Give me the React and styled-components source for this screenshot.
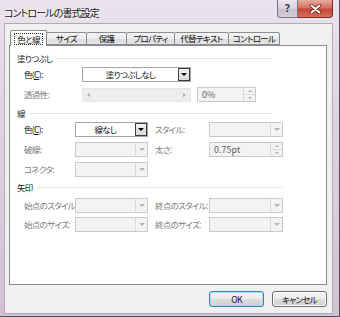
import React from "react"
import styled, { createGlobalStyle } from "styled-components"

const GlobalStyle = createGlobalStyle`
  html, body {
    margin: 0;
    padding: 0;
    background: #ffffff;
  }
  body {
    font-family: "Noto Sans CJK JP", "Noto Sans", sans-serif;
    font-feature-settings: "palt";
    color: #000;
  }
`

const Window = styled.div`
  width: 340px;
  height: 317px;
  box-sizing: border-box;
  display: flex;
  flex-direction: column;
  background: linear-gradient(180deg, #eae2ec 0%, #e0d4e3 35%, #d2c0d5 100%);
  border-right: 1px solid #55505a;
  border-bottom: 1px solid #55505a;
`

const TitleBar = styled.div`
  height: 23px;
  flex-shrink: 0;
  display: flex;
  align-items: flex-start;
`

const TitleText = styled.div`
  padding: 6px 0 0 4px;
  font-size: 10px;
  letter-spacing: -0.9px;
  line-height: 14px;
  color: #111;
  text-shadow: 0 0 4px #fff, 0 0 2px #fff;
`

const Captions = styled.div`
  margin-left: auto;
  margin-right: 6px;
  display: flex;
`

const HelpButton = styled.div`
  width: 21px;
  height: 18px;
  box-sizing: border-box;
  border: 1px solid #7d7385;
  border-top: none;
  border-radius: 0 0 0 4px;
  background: linear-gradient(180deg, #ece6ee 0%, #d9d0dd 50%, #c8bccd 51%, #d6cdda 100%);
  display: flex;
  align-items: center;
  justify-content: center;
  font-family: "DejaVu Sans", sans-serif;
  font-weight: bold;
  font-size: 10px;
  color: #3a3a44;
  text-shadow: 0 0 2px #fff;
`

const CloseButton = styled.div`
  width: 35px;
  height: 18px;
  box-sizing: border-box;
  border: 1px solid #6e2f28;
  border-left: none;
  border-top: none;
  border-radius: 0 0 4px 0;
  background: linear-gradient(180deg, #e7aaa0 0%, #d47163 45%, #c44534 55%, #d7705d 100%);
  display: flex;
  align-items: center;
  justify-content: center;
`

const Client = styled.div`
  flex: 1;
  margin: 0 6px 2px 4px;
  box-sizing: border-box;
  background: #f0f0f0;
  border: 1px solid #b4a9b8;
  display: flex;
  flex-direction: column;
  font-size: 8.5px;
  letter-spacing: -0.7px;
`

const TabStrip = styled.div`
  margin: 6px 0 0 5px;
  height: 15px;
  display: flex;
  align-items: flex-end;
  position: relative;
  z-index: 1;
`

const Tab = styled.div`
  width: ${p => p.$w}px;
  height: ${p => (p.$active ? 16 : 13)}px;
  margin-bottom: ${p => (p.$active ? -1 : 0)}px;
  margin-left: ${p => (p.$first ? 0 : -1)}px;
  box-sizing: border-box;
  border: 1px solid #898c95;
  border-bottom: ${p => (p.$active ? "none" : "1px solid #898c95")};
  border-radius: 2px 2px 0 0;
  background: ${p =>
    p.$active ? "#ffffff" : "linear-gradient(180deg, #f4f4f4 0%, #ebebeb 50%, #dedede 51%, #e5e5e5 100%)"};
  display: flex;
  align-items: center;
  justify-content: center;
  line-height: 11px;
  color: #111;
`

const FocusText = styled.span`
  outline: 1px dotted #333;
  outline-offset: 0;
  padding: 0 2px;
  line-height: 10px;
`

const Panel = styled.div`
  margin: 0 5px 0 4px;
  height: 240px;
  box-sizing: border-box;
  background: #ffffff;
  border: 1px solid #898c95;
  display: flex;
  flex-direction: column;
`

const SectionHeader = styled.div`
  display: flex;
  align-items: center;
  height: 10px;
  margin-top: ${p => p.$mt}px;
  margin-right: ${p => p.$end}px;
  padding-left: 7px;
  line-height: 10px;
  color: #1a1a1a;
`

const HeaderLine = styled.div`
  flex: 1;
  height: 1px;
  margin-left: 4px;
  background: #dbe3ec;
`

const Row = styled.div`
  display: flex;
  align-items: center;
  height: 15px;
  margin-top: ${p => p.$mt}px;
  padding-left: 14px;
`

const Label = styled.div`
  width: ${p => p.$w}px;
  margin-left: ${p => p.$ml || 0}px;
  flex-shrink: 0;
  line-height: 11px;
  white-space: nowrap;
  color: ${p => (p.$dim ? "#7c7c7c" : "#111")};
`

const Combo = styled.div`
  width: ${p => p.$w}px;
  height: 15px;
  box-sizing: border-box;
  flex-shrink: 0;
  display: flex;
  border: 1px solid ${p => (p.$off ? "#cacaca" : "#a4a4a4")};
  background: ${p => (p.$off ? "#f3f3f3" : "#ffffff")};
`

const ComboText = styled.div`
  flex: 1;
  text-align: center;
  line-height: 13px;
  color: #111;
`

const ComboArrow = styled.div`
  width: 12px;
  box-sizing: border-box;
  display: flex;
  align-items: center;
  justify-content: center;
  border: ${p => (p.$off ? "none" : "1px solid #3d3d3d")};
  border-left: 1px solid ${p => (p.$off ? "#dadada" : "#3d3d3d")};
  background: ${p => (p.$off ? "transparent" : "linear-gradient(180deg, #f2f2f2 0%, #d8d8d8 100%)")};

  &::after {
    content: "";
    border-left: 3px solid transparent;
    border-right: 3px solid transparent;
    border-top: 3px solid ${p => (p.$off ? "#b4b4b4" : "#000")};
  }
`

const Slider = styled.div`
  width: 109px;
  height: 14px;
  box-sizing: border-box;
  flex-shrink: 0;
  display: flex;
  align-items: center;
  justify-content: space-between;
  padding: 0 4px;
  background: #ededed;
  border: 1px solid #e6e6e6;
`

const SlideArrow = styled.span`
  width: 0;
  height: 0;
  border-top: 2.5px solid transparent;
  border-bottom: 2.5px solid transparent;
  border-left: ${p => (p.$dir === "right" ? "3px solid #a9a9a9" : "none")};
  border-right: ${p => (p.$dir === "left" ? "3px solid #a9a9a9" : "none")};
`

const Spin = styled.div`
  width: ${p => p.$w}px;
  height: 15px;
  margin-left: ${p => p.$ml || 0}px;
  box-sizing: border-box;
  flex-shrink: 0;
  display: flex;
  border: 1px solid #c9c9c9;
  background: #f3f3f3;
`

const SpinText = styled.div`
  flex: 1;
  padding-left: 4px;
  font-size: 9px;
  letter-spacing: 0;
  line-height: 13px;
  color: #5e5e5e;
`

const SpinButtons = styled.div`
  width: 11px;
  border-left: 1px solid #dadada;
  display: flex;
  flex-direction: column;
`

const SpinHalf = styled.div`
  flex: 1;
  display: flex;
  align-items: center;
  justify-content: center;
  border-top: ${p => (p.$down ? "1px solid #dadada" : "none")};

  &::after {
    content: "";
    border-left: 2px solid transparent;
    border-right: 2px solid transparent;
    border-bottom: ${p => (p.$down ? "none" : "2px solid #b0b0b0")};
    border-top: ${p => (p.$down ? "2px solid #b0b0b0" : "none")};
  }
`

const Footer = styled.div`
  display: flex;
  justify-content: flex-end;
  gap: 8px;
  margin: 6px 5px 0 0;
`

const Button = styled.div`
  width: 55px;
  height: 16px;
  box-sizing: border-box;
  border: 1px solid ${p => (p.$default ? "#3c7fb1" : "#707070")};
  border-radius: 3px;
  background: linear-gradient(180deg, #f4f4f4 0%, #ebebeb 50%, #dddddd 51%, #cfcfcf 100%);
  box-shadow: ${p => (p.$default ? "inset 0 0 0 1px #a9dbf6" : "inset 0 0 0 1px #fbfbfb")};
  display: flex;
  align-items: center;
  justify-content: center;
  line-height: 11px;
  color: #111;
`

const tabs = [
  { text: "色と線", w: 37 },
  { text: "サイズ", w: 41 },
  { text: "保護", w: 41 },
  { text: "プロパティ", w: 49 },
  { text: "代替テキスト", w: 55 },
  { text: "コントロール", w: 52 },
]

const Color = () => (
  <>
    色(<u>C</u>):
  </>
)

const App = () => {
  return (
    <>
      <GlobalStyle />
      <Window>
        <TitleBar>
          <TitleText>コントロールの書式設定</TitleText>
          <Captions>
            <HelpButton>?</HelpButton>
            <CloseButton>
              <svg width="13" height="10" viewBox="0 0 13 10">
                <path d="M2.5 1.5 L10.5 8.5 M10.5 1.5 L2.5 8.5" stroke="#5a1a14" strokeWidth="3.6" strokeLinecap="round" />
                <path d="M2.5 1.5 L10.5 8.5 M10.5 1.5 L2.5 8.5" stroke="#ffffff" strokeWidth="2" strokeLinecap="round" />
              </svg>
            </CloseButton>
          </Captions>
        </TitleBar>
        <Client>
          <TabStrip>
            {tabs.map((t, i) => (
              <Tab key={t.text} $w={t.w} $active={i === 0} $first={i === 0}>
                {i === 0 ? <FocusText>{t.text}</FocusText> : t.text}
              </Tab>
            ))}
          </TabStrip>
          <Panel>
            <SectionHeader $mt={7} $end={54}>
              塗りつぶし
              <HeaderLine />
            </SectionHeader>
            <Row $mt={4}>
              <Label $w={58}><Color /></Label>
              <Combo $w={109}>
                <ComboText>塗りつぶしなし</ComboText>
                <ComboArrow />
              </Combo>
            </Row>
            <Row $mt={5}>
              <Label $w={58} $dim>透過性:</Label>
              <Slider>
                <SlideArrow $dir="left" />
                <SlideArrow $dir="right" />
              </Slider>
              <Spin $w={59} $ml={6}>
                <SpinText>0%</SpinText>
                <SpinButtons>
                  <SpinHalf />
                  <SpinHalf $down />
                </SpinButtons>
              </Spin>
            </Row>

            <SectionHeader $mt={6} $end={54}>
              線
              <HeaderLine />
            </SectionHeader>
            <Row $mt={4}>
              <Label $w={51}><Color /></Label>
              <Combo $w={73}>
                <ComboText>線なし</ComboText>
                <ComboArrow />
              </Combo>
              <Label $w={54} $ml={7} $dim>スタイル:</Label>
              <Combo $w={74} $off>
                <ComboText />
                <ComboArrow $off />
              </Combo>
            </Row>
            <Row $mt={5}>
              <Label $w={51} $dim>破線:</Label>
              <Combo $w={73} $off>
                <ComboText />
                <ComboArrow $off />
              </Combo>
              <Label $w={54} $ml={7} $dim>太さ:</Label>
              <Spin $w={74}>
                <SpinText>0.75pt</SpinText>
                <SpinButtons>
                  <SpinHalf />
                  <SpinHalf $down />
                </SpinButtons>
              </Spin>
            </Row>
            <Row $mt={5}>
              <Label $w={51} $dim>コネクタ:</Label>
              <Combo $w={73} $off>
                <ComboText />
                <ComboArrow $off />
              </Combo>
            </Row>

            <SectionHeader $mt={5} $end={43}>
              矢印
              <HeaderLine />
            </SectionHeader>
            <Row $mt={6}>
              <Label $w={51} $dim>始点のスタイル:</Label>
              <Combo $w={73} $off>
                <ComboText />
                <ComboArrow $off />
              </Combo>
              <Label $w={54} $ml={7} $dim>終点のスタイル:</Label>
              <Combo $w={74} $off>
                <ComboText />
                <ComboArrow $off />
              </Combo>
            </Row>
            <Row $mt={4}>
              <Label $w={51} $dim>始点のサイズ:</Label>
              <Combo $w={73} $off>
                <ComboText />
                <ComboArrow $off />
              </Combo>
              <Label $w={54} $ml={7} $dim>終点のサイズ:</Label>
              <Combo $w={74} $off>
                <ComboText />
                <ComboArrow $off />
              </Combo>
            </Row>
          </Panel>
          <Footer>
            <Button $default>OK</Button>
            <Button>キャンセル</Button>
          </Footer>
        </Client>
      </Window>
    </>
  )
}

export default App
